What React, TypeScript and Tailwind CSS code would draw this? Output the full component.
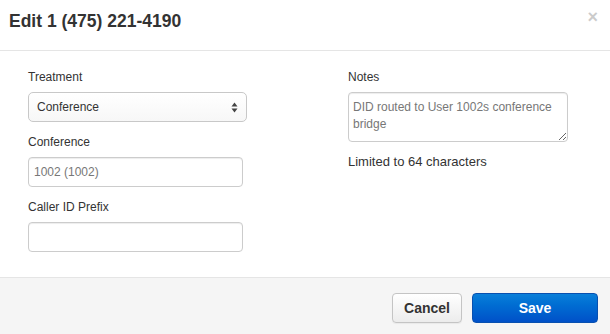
const inputClass =
  'block w-[215px] h-[30px] px-[5px] text-[12px] text-[#777] bg-white border border-[#ccc] rounded-[4px] shadow-[inset_0_1px_1px_rgba(0,0,0,0.075)] outline-none';

const labelClass = 'block text-[12px] leading-[16px] text-[#333]';

const SelectArrows = () => (
  <svg width="7" height="11" viewBox="0 0 7 11" aria-hidden="true">
    <path d="M3.5 0.5 L6.5 4.5 L0.5 4.5 Z" fill="#444" />
    <path d="M3.5 10.5 L6.5 6.5 L0.5 6.5 Z" fill="#444" />
  </svg>
);

const Field = ({ label, children, className = '' }: { label: string; children: React.ReactNode; className?: string }) => {
  return (
    <div className={className}>
      <label className={labelClass}>{label}</label>
      <div className="mt-[7px]">{children}</div>
    </div>
  );
};

const App = () => {
  return (
    <div
      className="w-[610px] h-[334px] bg-white flex flex-col text-[#333] overflow-hidden"
      style={{ fontFamily: '"Liberation Sans", Arial, sans-serif' }}
    >
      {/* header */}
      <div className="h-[51px] shrink-0 border-b border-[#e5e5e5] flex items-start justify-between pl-[9px] pr-[12px] pt-[10px]">
        <h3 className="text-[17.5px] leading-[22px] font-bold text-[#333]">Edit 1 (475) 221-4190</h3>
        <span className="text-[18px] leading-[18px] font-bold text-[#000] opacity-20 mt-[-2px]">×</span>
      </div>

      {/* body */}
      <div className="flex-1 flex pl-[28px] pt-[18px]">
        <div className="w-[320px]">
          <Field label="Treatment">
            <div className="w-[219px] h-[30px] flex items-center justify-between pl-[8px] pr-[8px] border border-[#c8c8c8] rounded-[5px] bg-gradient-to-b from-white to-[#f7f7f7] text-[12px] text-[#333]">
              <span>Conference</span>
              <SelectArrows />
            </div>
          </Field>
          <Field label="Conference" className="mt-[12px]">
            <input className={inputClass} readOnly value="1002 (1002)" />
          </Field>
          <Field label="Caller ID Prefix" className="mt-[12px]">
            <input className={inputClass} readOnly value="" />
          </Field>
        </div>

        <div className="w-[220px]">
          <Field label="Notes">
            <textarea
              className="block w-[220px] h-[50px] pl-[4px] pr-[4px] pt-[6px] text-[12px] leading-[17px] text-[#777] bg-white border border-[#ccc] rounded-[4px] shadow-[inset_0_1px_1px_rgba(0,0,0,0.075)] outline-none resize-y"
              readOnly
              value="DID routed to User 1002s conference bridge"
            />
          </Field>
          <p className="mt-[11px] text-[13px] leading-[18px] text-[#333]">Limited to 64 characters</p>
        </div>
      </div>

      {/* footer */}
      <div className="h-[57px] shrink-0 border-t border-[#e5e5e5] bg-[#f5f5f5] flex items-start justify-end gap-[10px] pt-[15px] pr-[12px]">
        <button className="w-[70px] h-[30px] rounded-[4px] border border-[#c4c4c4] bg-gradient-to-b from-white to-[#ececec] text-[14px] font-bold text-[#333] shadow-[0_1px_1px_rgba(0,0,0,0.05)]">
          Cancel
        </button>
        <button className="w-[126px] h-[30px] rounded-[4px] border border-[#0850b0] bg-gradient-to-b from-[#0a7fd9] to-[#0050c8] text-[14px] font-bold text-white">
          Save
        </button>
      </div>
    </div>
  );
};

export default App;
